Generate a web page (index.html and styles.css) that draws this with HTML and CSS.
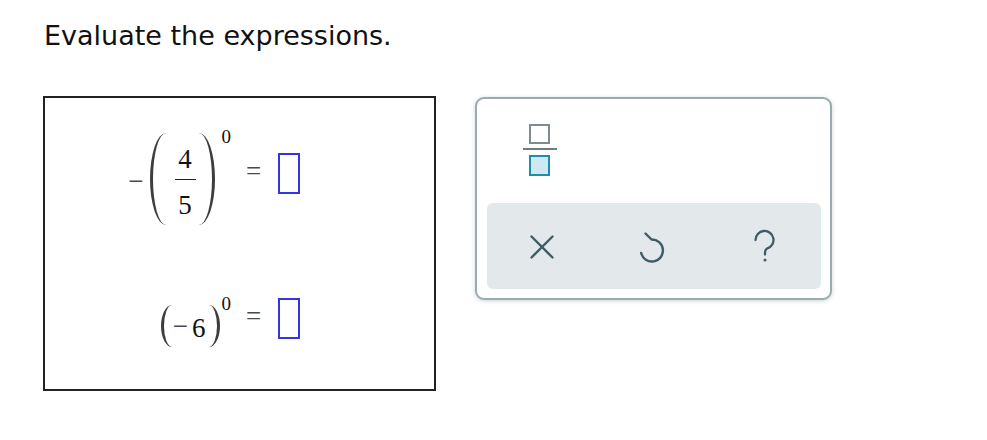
FILE: index.html
```html
<!DOCTYPE html>
<html lang="en">
<head>
<meta charset="utf-8">
<title>Evaluate the expressions</title>
<link rel="stylesheet" href="styles.css">
</head>
<body>
<h1 class="prompt">Evaluate the expressions.</h1>
<div class="work">
  <div class="problems">
    <div class="row row-1">
      <div class="lhs lhs-1">
        <span class="op minus">−</span>
        <span class="paren paren-l big"></span>
        <span class="frac">
          <span class="num">4</span>
          <span class="bar"></span>
          <span class="den">5</span>
        </span>
        <span class="paren paren-r big"></span>
        <span class="sup sup-1">0</span>
      </div>
      <span class="op eq">=</span>
      <span class="answer"></span>
    </div>
    <div class="row row-2">
      <div class="lhs lhs-2">
        <span class="paren paren-l small"></span>
        <span class="op minus minus-2">−</span>
        <span class="digit">6</span>
        <span class="paren paren-r small"></span>
        <span class="sup sup-2">0</span>
      </div>
      <span class="op eq">=</span>
      <span class="answer"></span>
    </div>
  </div>
  <div class="palette">
    <div class="palette-top">
      <button class="key frac-key" aria-label="fraction">
        <svg width="34" height="53" viewBox="0 0 34 53">
          <rect x="7" y="1" width="19" height="18" fill="none" stroke="#7e8b8f" stroke-width="2"/>
          <line x1="0" y1="25" x2="34" y2="25" stroke="#6f7c80" stroke-width="2"/>
          <rect x="7" y="32" width="19" height="19" fill="#cfe8f2" stroke="#1d8fad" stroke-width="2"/>
        </svg>
      </button>
    </div>
    <div class="palette-actions">
      <button class="action" aria-label="clear">
        <svg width="26" height="26" viewBox="0 0 26 26">
          <path d="M2.5 2.5 L23.5 23.5 M23.5 2.5 L2.5 23.5" stroke="#3f5c65" stroke-width="2.4" stroke-linecap="round" fill="none"/>
        </svg>
      </button>
      <button class="action" aria-label="undo">
        <svg width="32" height="36" viewBox="0 0 32 36">
          <path d="M8.5 4.5 L14.5 10.5 A11 11 0 1 1 4.2 24" stroke="#3f5c65" stroke-width="2.4" stroke-linecap="round" stroke-linejoin="round" fill="none"/>
        </svg>
      </button>
      <button class="action" aria-label="help">
        <svg width="28" height="36" viewBox="0 0 28 36">
          <path d="M4.5 11 A9 9 0 1 1 16 19.6 Q14 20.8 14 23.5 V25.5" stroke="#3f5c65" stroke-width="2.3" stroke-linecap="round" fill="none"/>
          <circle cx="14" cy="31" r="1.5" fill="#3f5c65"/>
        </svg>
      </button>
    </div>
  </div>
</div>
</body>
</html>
```
FILE: styles.css
```css
html, body {
  margin: 0;
  padding: 0;
  background: #ffffff;
}

.prompt {
  margin: 21px 0 0 44px;
  font-family: "DejaVu Sans", Verdana, sans-serif;
  font-weight: normal;
  font-size: 27px;
  line-height: 30px;
  color: #111111;
}

.work {
  display: flex;
  align-items: flex-start;
  gap: 39px;
  margin: 45px 0 0 43px;
}

.problems {
  box-sizing: border-box;
  width: 393px;
  height: 295px;
  border: 2px solid #222222;
  padding-top: 23px;
  display: flex;
  flex-direction: column;
  gap: 65px;
  font-family: "Liberation Serif", "Times New Roman", serif;
  color: #111111;
}

.row {
  display: grid;
  grid-template-columns: 186px max-content max-content;
  justify-content: start;
  align-items: center;
}

.lhs {
  justify-self: end;
  display: flex;
  align-items: center;
}

.lhs-1 {
  height: 92px;
  margin-top: 12px;
}

.lhs-2 {
  height: 42px;
  margin-top: 15px;
}

.op {
  font-family: "Liberation Serif", "Times New Roman", serif;
  font-size: 27px;
  line-height: 27px;
  color: #4a4a4a;
}

.minus {
  margin-top: 4px;
}

.minus-2 {
  margin-left: 1px;
  margin-top: 0;
}

.eq {
  margin-left: 15px;
  margin-bottom: 4px;
}

.paren {
  box-sizing: border-box;
  display: block;
  flex: none;
}

.paren-l {
  border-left: 3.5px solid #3d3d3d;
  border-radius: 100% 0 0 100% / 50% 0 0 50%;
}

.paren-r {
  border-right: 3.5px solid #3d3d3d;
  border-radius: 0 100% 100% 0 / 0 50% 50% 0;
}

.paren.big {
  width: 16px;
  height: 92px;
}

.paren-l.big {
  margin-left: 6px;
}

.paren-r.big {
  margin-left: 3px;
}

.paren.small {
  width: 11px;
  height: 42px;
}

.paren-r.small {
  margin-left: 3px;
}

.frac {
  display: flex;
  flex-direction: column;
  align-items: center;
  width: 21px;
  margin-left: 9px;
  font-family: "Liberation Serif", "Times New Roman", serif;
  font-size: 27px;
  line-height: 22px;
  margin-top: 6px;
}

.num {
  display: block;
}

.bar {
  display: block;
  width: 21px;
  height: 1.5px;
  background: #222222;
  margin: 9px 0 14px;
}

.den {
  display: block;
}

.digit {
  font-family: "Liberation Serif", "Times New Roman", serif;
  font-size: 27px;
  line-height: 27px;
  margin-left: 4px;
  margin-top: 4px;
}

.sup {
  align-self: flex-start;
  font-family: "Liberation Serif", "Times New Roman", serif;
  font-size: 19px;
  line-height: 19px;
}

.sup-1 {
  margin-left: 7px;
  margin-top: -6px;
}

.sup-2 {
  margin-left: 2px;
  margin-top: -11px;
}

.answer {
  box-sizing: border-box;
  display: block;
  width: 22px;
  height: 41px;
  margin-left: 17px;
  border: 2px solid #3535e0;
}

.palette {
  box-sizing: border-box;
  width: 357px;
  height: 203px;
  margin-top: 1px;
  border: 2px solid #9aabb0;
  border-radius: 9px;
  background: #ffffff;
  box-shadow: 0 1px 4px rgba(60, 80, 90, 0.25);
  display: flex;
  flex-direction: column;
  padding: 0 9.5px 9.5px;
}

.palette-top {
  height: 104px;
  display: flex;
  align-items: flex-start;
  padding: 25px 0 0 36px;
  box-sizing: border-box;
}

button {
  border: 0;
  background: transparent;
  padding: 0;
  margin: 0;
  cursor: pointer;
  display: flex;
  align-items: center;
  justify-content: center;
}

.key svg,
.action svg {
  display: block;
}

.palette-actions {
  flex: 1;
  background: #e3e8ea;
  border-radius: 6px;
  display: grid;
  grid-template-columns: 1fr 1fr 1fr;
  align-items: center;
}

.action {
  justify-self: center;
  height: 40px;
  margin-top: 2px;
}
```
